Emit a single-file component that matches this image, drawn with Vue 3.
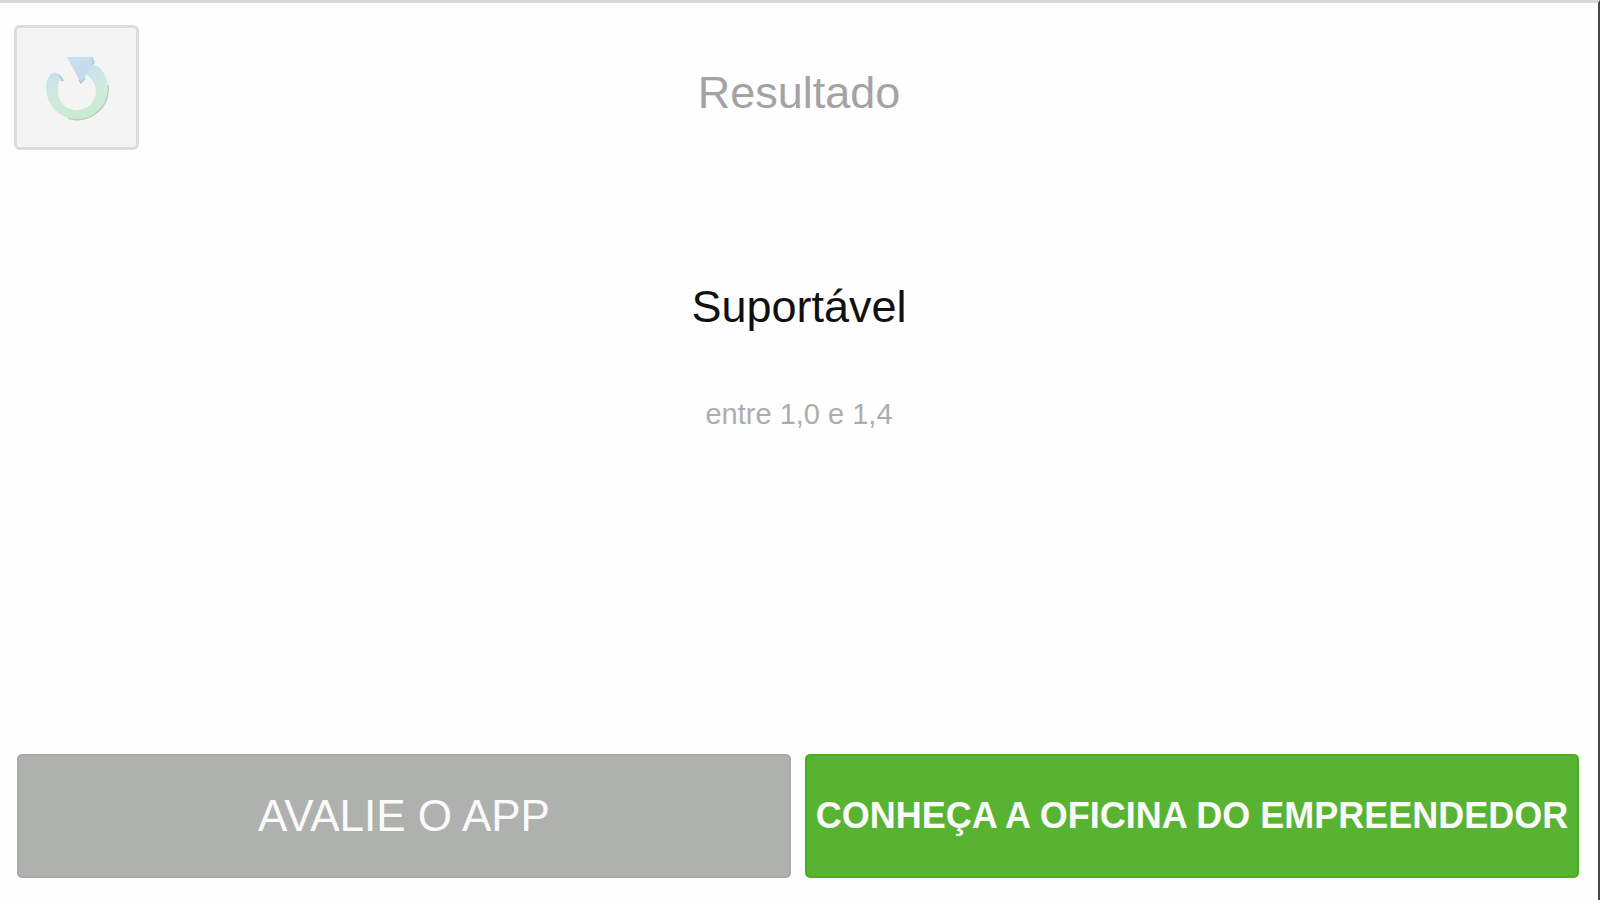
<script setup>
const result = { title: 'Resultado', level: 'Suportável', range: 'entre 1,0 e 1,4' }
</script>

<template>
  <div class="screen">
    <header class="top">
      <button class="restart" type="button" aria-label="Recomeçar">
        <svg viewBox="0 0 72 72" aria-hidden="true">
          <defs>
            <linearGradient id="ring" x1="0" y1="0" x2="0.3" y2="1">
              <stop offset="0.1" stop-color="#c9deef" />
              <stop offset="0.55" stop-color="#cfe9e0" />
              <stop offset="1" stop-color="#c9eccf" />
            </linearGradient>
            <linearGradient id="head" x1="0" y1="0" x2="0.4" y2="1">
              <stop offset="0" stop-color="#c8e0ef" />
              <stop offset="1" stop-color="#c4d9ed" />
            </linearGradient>
          </defs>
          <path d="M67 33 A31 31 0 0 1 27 66" fill="none" stroke="#b9cbbc" stroke-width="2" />
          <path d="M10 22 Q14 19 18 22 L22 28 L19 28 C17 31 17 34 17 37 A19 19 0 1 0 44 22 L50 14 Q55 12 59 16 A31 31 0 0 1 67 36 A31 31 0 0 1 5 36 Q5 28 10 22 Z" fill="url(#ring)" />
          <path d="M26 5 L52 5 L53 9 L49 17 L46 22 L40 31 Z" fill="url(#head)" />
          <path d="M51 7 L53 10 L51 13 M44 26 L40 31 L38 28 M18 23 L22 28 L20 29" fill="none" stroke="#b4c5d0" stroke-width="1.5" />
        </svg>
      </button>
      <h1>{{ result.title }}</h1>
    </header>
    <main>
      <p class="level">{{ result.level }}</p>
      <p class="range">{{ result.range }}</p>
    </main>
    <footer>
      <button class="action rate" type="button">AVALIE O APP</button>
      <button class="action workshop" type="button">CONHEÇA A OFICINA DO EMPREENDEDOR</button>
    </footer>
  </div>
</template>

<style>
body { margin: 0; background: #fefefe; }
</style>

<style scoped>
.screen {
  box-sizing: border-box;
  min-height: 100vh;
  display: flex;
  flex-direction: column;
  border-top: 3px solid #d8d8d8;
  border-right: 2px solid #484848;
  background: #fefefe;
  font-family: "Liberation Sans", Arial, sans-serif;
}
.top {
  display: grid;
  grid-template-columns: 1fr auto 1fr;
  align-items: start;
  padding: 22px 14px 0;
}
.restart {
  box-sizing: border-box;
  width: 125px;
  height: 125px;
  padding: 0;
  display: grid;
  place-items: center;
  border: 3px solid #dcdcdc;
  border-radius: 6px;
  background: #f4f4f4;
}
.restart svg { width: 72px; height: 72px; }
h1, p { margin: 0; font-weight: 400; text-align: center; }
h1 { padding-top: 42px; font-size: 45px; line-height: 52px; color: #a3a3a3; }
main { flex: 1; padding-top: 131px; }
.level { font-size: 45px; line-height: 52px; color: #111; }
.range { margin-top: 64px; font-size: 29px; line-height: 34px; color: #adadad; }
footer {
  display: grid;
  grid-template-columns: 1fr 1fr;
  gap: 14px;
  padding: 0 19px 22px 17px;
}
.action {
  min-width: 0;
  min-height: 124px;
  padding: 0 4px;
  border: 2px solid;
  border-radius: 5px;
  color: #fafafa;
  font-family: inherit;
}
.rate { border-color: #a8aaa7; background: #afb1ae; font-size: 44px; }
.workshop { border-color: #4bad22; background: #58b332; font-size: 36px; font-weight: 700; }
</style>
